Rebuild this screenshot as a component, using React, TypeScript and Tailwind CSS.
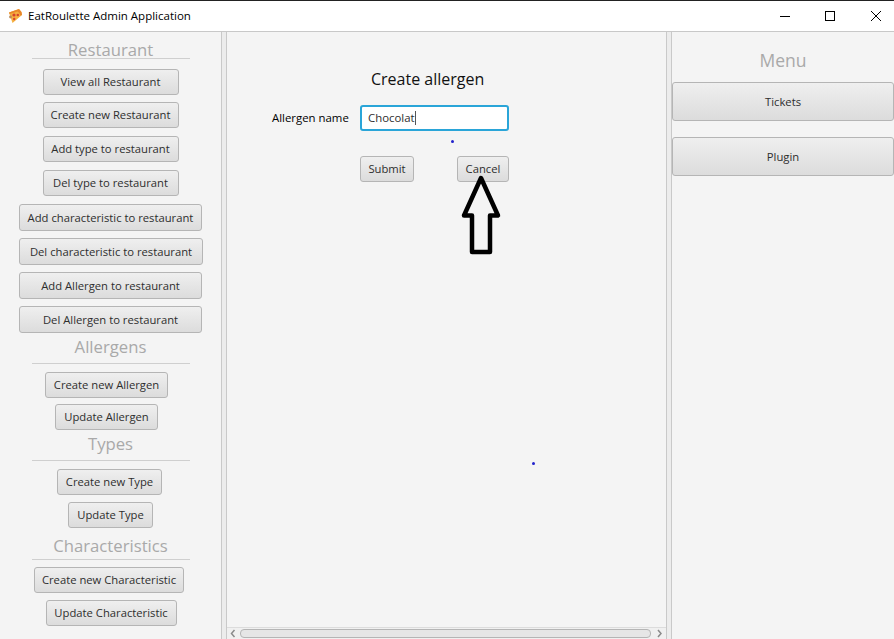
type Btn = { label: string; className: string };

const BTN =
  "flex items-center justify-center rounded-[3px] border border-[#b5b5b5] bg-gradient-to-b from-[#efefef] to-[#dcdcdc] text-[11.25px] text-[#2e2e2e]";

const SECTIONS: { title: string; head: string; line: string; buttons: Btn[] }[] = [
  {
    title: "Restaurant",
    head: "h-[26px] pt-[8px]",
    line: "mb-[10px]",
    buttons: [
      { label: "View all Restaurant", className: "h-[26px] w-[136px] mb-[7px]" },
      { label: "Create new Restaurant", className: "h-[26px] w-[136px] mb-[8px]" },
      { label: "Add type to restaurant", className: "h-[26px] w-[136px] mb-[8px]" },
      { label: "Del type to restaurant", className: "h-[26px] w-[136px] mb-[8px]" },
      { label: "Add characteristic to restaurant", className: "h-[27px] w-[183px] mb-[7px] pt-[1px]" },
      { label: "Del characteristic to restaurant", className: "h-[27px] w-[184px] ml-[1px] mb-[7px] pt-[1px]" },
      { label: "Add Allergen to restaurant", className: "h-[27px] w-[183px] mb-[7px] pt-[1px]" },
      { label: "Del Allergen to restaurant", className: "h-[27px] w-[183px] pt-[1px]" },
    ],
  },
  {
    title: "Allergens",
    head: "h-[30px] pt-[4px]",
    line: "mb-[8px]",
    buttons: [
      { label: "Create new Allergen", className: "h-[26px] w-[123px] mr-[8px] mb-[6px]" },
      { label: "Update Allergen", className: "h-[26px] w-[103px] mr-[8px] mb-[1px]" },
    ],
  },
  {
    title: "Types",
    head: "h-[29px] pt-[3px]",
    line: "mb-[8px]",
    buttons: [
      { label: "Create new Type", className: "h-[26px] w-[105px] mr-[2px] mb-[7px]" },
      { label: "Update Type", className: "h-[26px] w-[85px]" },
    ],
  },
  {
    title: "Characteristics",
    head: "h-[31px] pt-[8px]",
    line: "mb-[7px]",
    buttons: [
      { label: "Create new Characteristic", className: "h-[26px] w-[150px] mr-[3px] mb-[7px]" },
      { label: "Update Characteristic", className: "h-[26px] w-[131px] ml-[1px]" },
    ],
  },
];

function PizzaIcon() {
  return (
    <svg width="16" height="16" viewBox="0 0 16 16">
      <path d="M2 4.5 L12 1 Q15 3.5 15 7 L5.5 15 Z" fill="#f5b041" />
      <path d="M2 4.5 L12 1 Q15 3.5 15 7 L13.5 7.5 Q12.5 4.5 10.5 3.5 L2.6 6 Z" fill="#e8862a" />
      <circle cx="7" cy="7" r="1.6" fill="#d8432b" />
      <circle cx="10.8" cy="7" r="1.3" fill="#d8432b" />
      <circle cx="7.2" cy="11" r="1.2" fill="#d8432b" />
      <circle cx="3.5" cy="9" r="1.4" fill="#b98a5a" />
    </svg>
  );
}

function WindowControls() {
  return (
    <div className="ml-auto flex items-center">
      <svg width="10" height="10" viewBox="0 0 10 10" className="mr-[35px]">
        <path d="M0 5.5 H10" stroke="#000" strokeWidth="1" />
      </svg>
      <svg width="10" height="10" viewBox="0 0 10 10" className="mr-[36px]">
        <rect x="0.5" y="0.5" width="9" height="9" fill="none" stroke="#000" strokeWidth="1" />
      </svg>
      <svg width="10" height="10" viewBox="0 0 10 10" className="mr-[13px]">
        <path d="M0 0 L10 10 M10 0 L0 10" stroke="#000" strokeWidth="1" />
      </svg>
    </div>
  );
}

function TitleBar() {
  return (
    <div className="flex h-[32px] shrink-0 items-center border-t border-b border-t-[#222] border-b-[#c8c8c8] bg-white">
      <div className="ml-[7px] flex items-center gap-[5px]">
        <PizzaIcon />
        <span className="text-[11.5px] text-black">EatRoulette Admin Application</span>
      </div>
      <WindowControls />
    </div>
  );
}

function Sidebar() {
  return (
    <aside className="flex w-[221px] shrink-0 flex-col items-center bg-[#f4f4f4]">
      {SECTIONS.map((section) => (
        <section key={section.title} className="flex w-full flex-col items-center">
          <h2 className={`${section.head} text-[16.7px] leading-[20px] text-[#a9a9a9]`}>
            {section.title}
          </h2>
          <div className={`${section.line} h-px w-[158px] bg-[#cfcfcf]`} />
          {section.buttons.map((b) => (
            <button key={b.label} type="button" className={`${BTN} ${b.className}`}>
              {b.label}
            </button>
          ))}
        </section>
      ))}
    </aside>
  );
}

function Divider() {
  return <div className="w-[6px] shrink-0 border-x border-[#c9c9c9] bg-[#ececec]" />;
}

function CenterPane() {
  return (
    <main className="relative flex w-[439px] shrink-0 flex-col bg-[#f4f4f4]">
      <div className="flex flex-1 flex-col pl-[45px] pt-[36px]">
        <h1 className="ml-[99px] text-[16px] leading-[22px] text-[#111]">Create allergen</h1>
        <div className="mt-[15px] flex items-center">
          <label className="w-[88px] text-[11.4px] text-black">Allergen name</label>
          <div className="flex h-[26px] w-[149px] items-center rounded-[3px] border-2 border-[#2aa5d8] bg-white pl-[6px] text-[11.4px] text-[#2e2e2e]">
            Chocolat
            <span className="h-[14px] w-px bg-[#555]" />
          </div>
        </div>
        <div className="ml-[88px] mt-[25px] flex gap-[43px]">
          <button type="button" className={`${BTN} h-[26px] w-[54px]`}>Submit</button>
          <button type="button" className={`${BTN} h-[26px] w-[52px]`}>Cancel</button>
        </div>
      </div>
      <div className="flex h-[12px] shrink-0 items-center border-t border-[#dcdcdc] bg-[#f0f0f0]">
        <svg width="13" height="11" viewBox="0 0 13 11" className="shrink-0">
          <path d="M7.5 2 L4.5 5.5 L7.5 9" fill="none" stroke="#8a8a8a" strokeWidth="1.5" />
        </svg>
        <div className="h-[9px] flex-1 rounded-[4px] border border-[#b5b5b5] bg-[#e6e6e6]" />
        <svg width="15" height="11" viewBox="0 0 15 11" className="shrink-0">
          <path d="M7 2 L10 5.5 L7 9" fill="none" stroke="#8a8a8a" strokeWidth="1.5" />
        </svg>
      </div>

      {/* annotation marks drawn on top of the screenshot */}
      <span className="absolute left-[224px] top-[108px] h-[3px] w-[3px] rounded-full bg-[#2222cc]" />
      <span className="absolute left-[305px] top-[430px] h-[3px] w-[3px] rounded-full bg-[#2222cc]" />
      <svg width="42" height="82" viewBox="0 0 42 82" className="absolute left-[233px] top-[142px]">
        <path
          d="M21 4 L38 41.5 L30 41.5 L30 78 L12 78 L12 41.5 L4 41.5 Z"
          fill="none"
          stroke="#000"
          strokeWidth="4.5"
          strokeLinejoin="round"
        />
      </svg>
    </main>
  );
}

function RightPane() {
  return (
    <aside className="flex flex-1 flex-col bg-[#f4f4f4]">
      <h2 className="pt-[16px] text-center text-[17.5px] leading-[24px] text-[#a9a9a9]">Menu</h2>
      <button type="button" className={`${BTN} mt-[10px] h-[39px] w-full pt-[1px]`}>Tickets</button>
      <button type="button" className={`${BTN} mt-[16px] h-[39px] w-full pt-[1px]`}>Plugin</button>
    </aside>
  );
}

export default function App() {
  return (
    <div className="flex h-[639px] w-[894px] flex-col overflow-hidden bg-[#f4f4f4] font-['Open_Sans','Noto_Sans',sans-serif]">
      <TitleBar />
      <div className="flex flex-1 overflow-hidden">
        <Sidebar />
        <Divider />
        <CenterPane />
        <Divider />
        <RightPane />
      </div>
    </div>
  );
}
